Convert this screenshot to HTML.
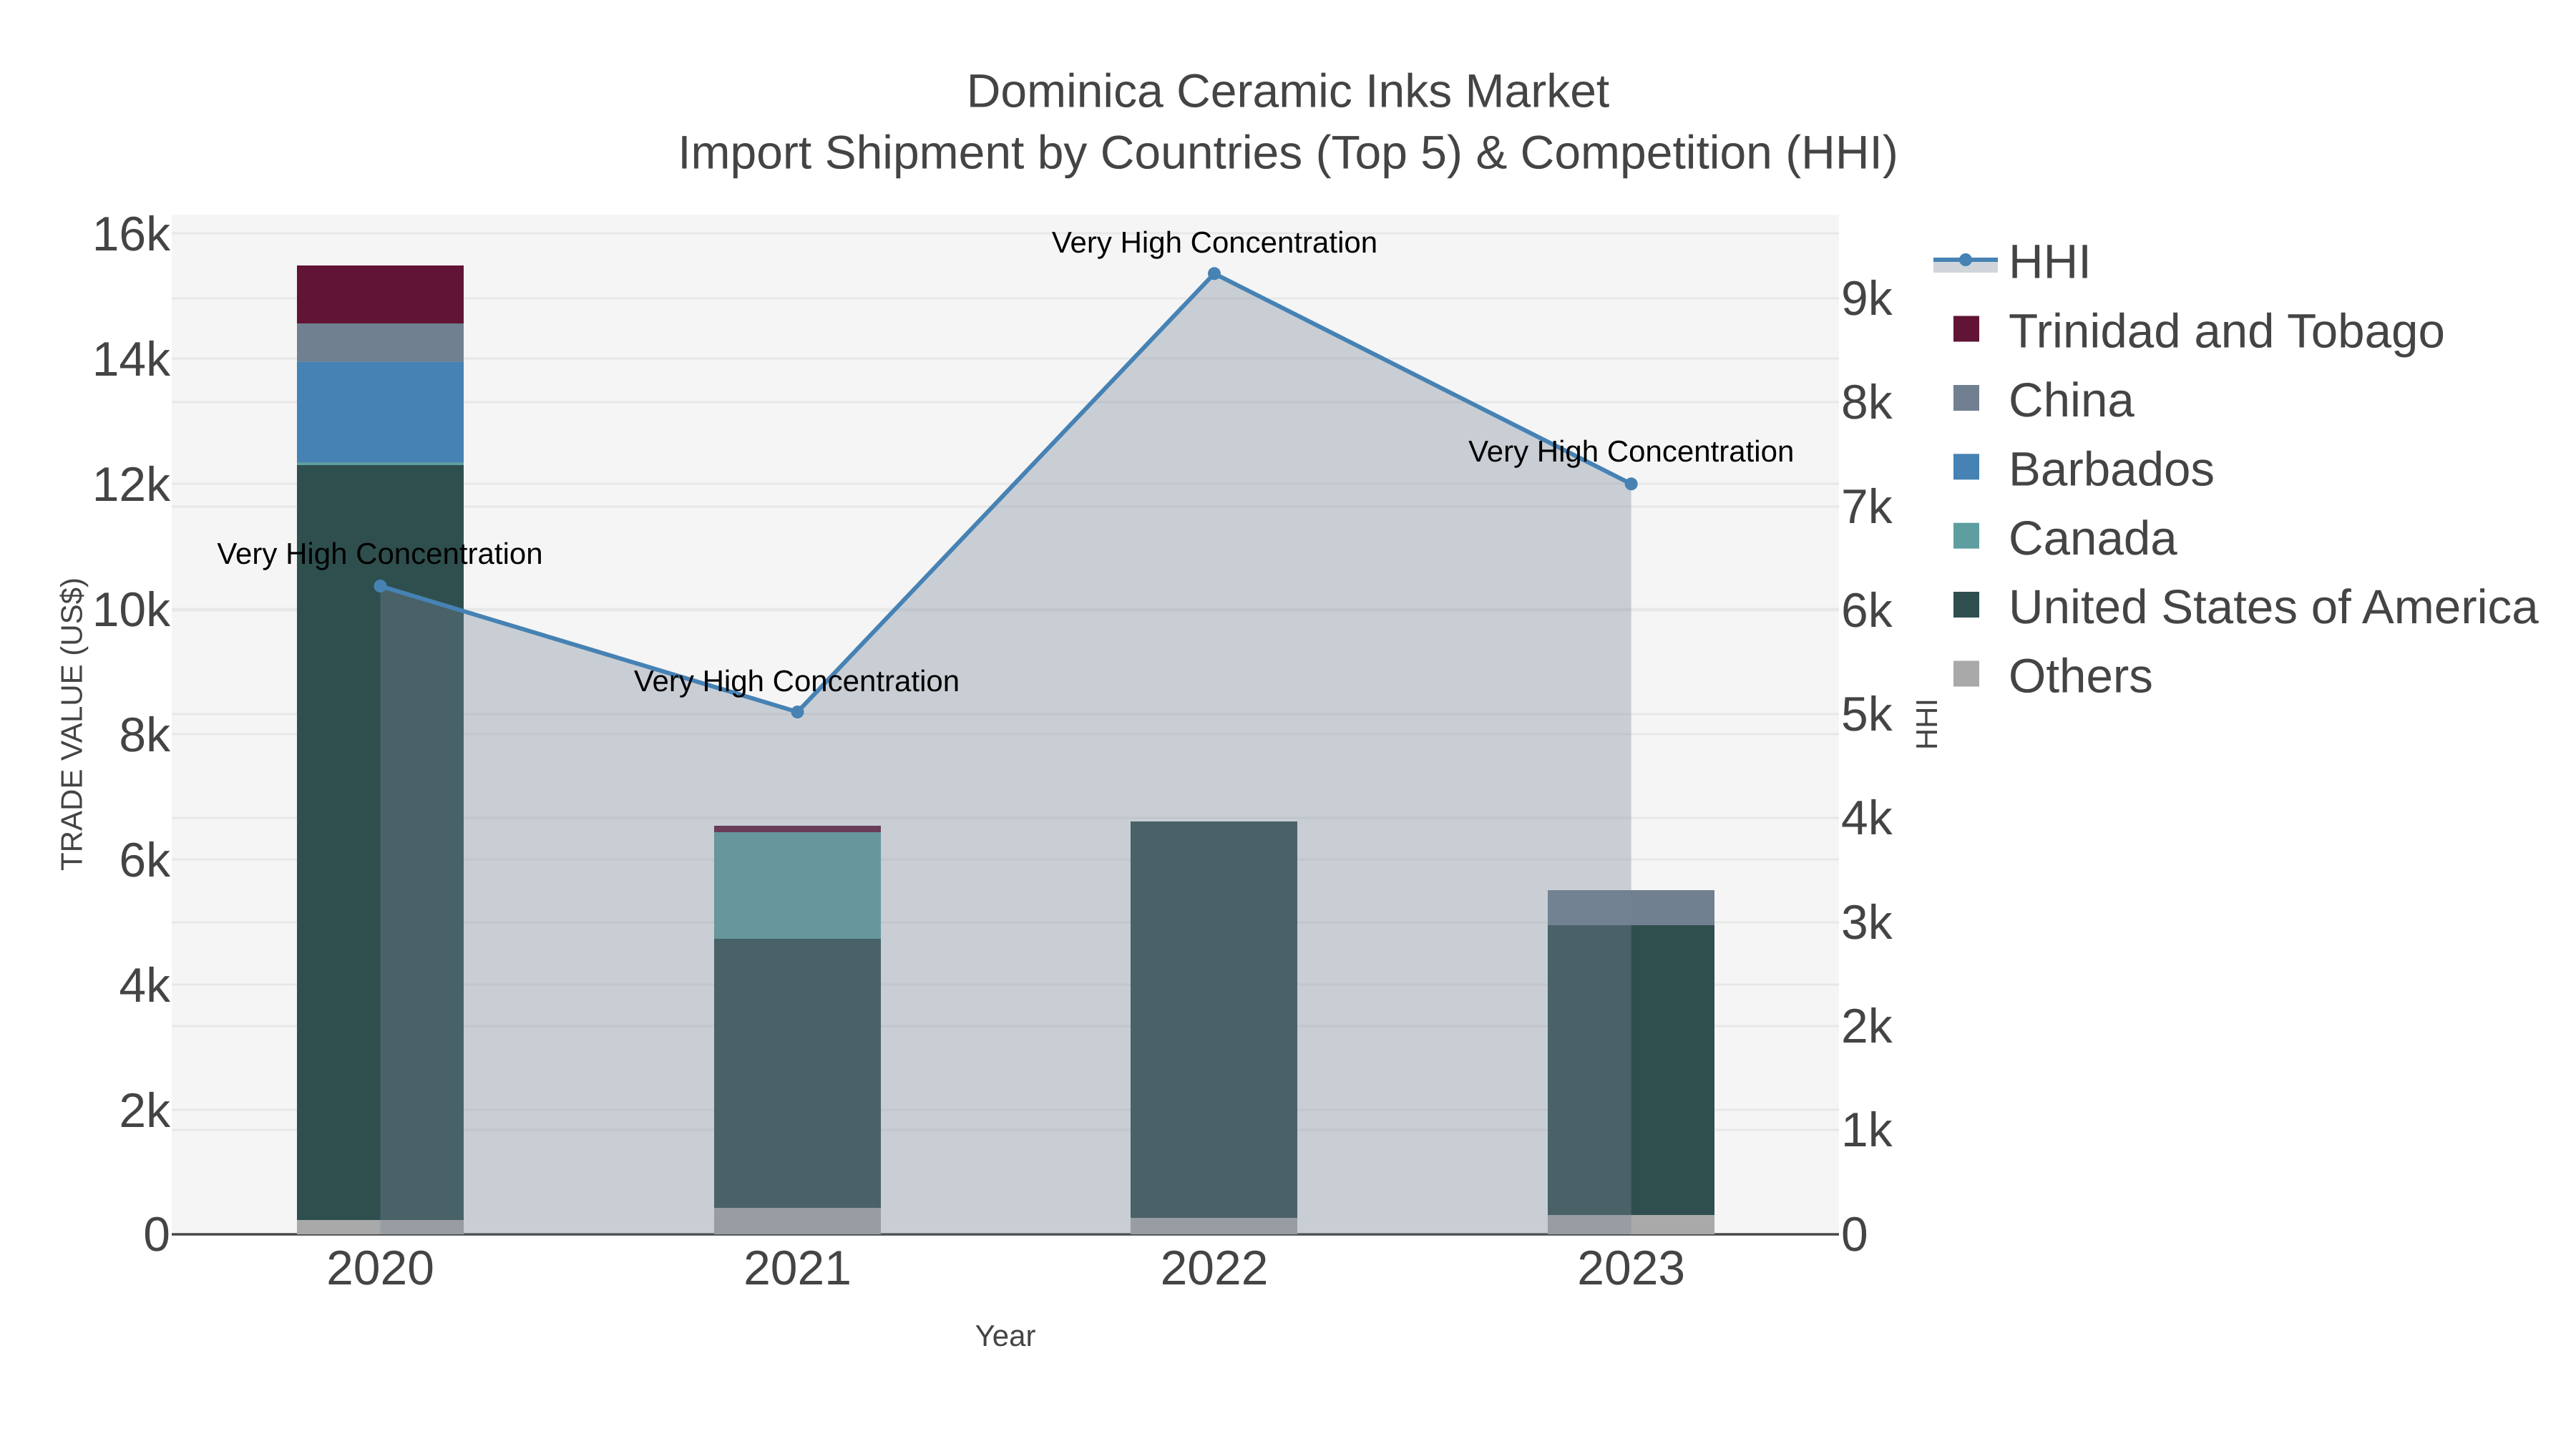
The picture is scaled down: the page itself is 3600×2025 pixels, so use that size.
<!DOCTYPE html>
<html>
<head>
<meta charset="utf-8">
<title>Dominica Ceramic Inks Market</title>
<style>
html,body{margin:0;padding:0;background:#fff;width:3600px;height:2025px;overflow:hidden}
svg{display:block}
text{font-family:"Liberation Sans",Arial,sans-serif;fill:#444;text-rendering:geometricPrecision}
.t{font-size:67.8px}
.l{font-size:67.3px}
.a{font-size:42px;fill:#000;text-anchor:middle}
.s{font-size:42px;text-anchor:middle}
.g{stroke:#e8e8e8;stroke-width:3;fill:none}
</style>
</head>
<body>
<svg width="3600" height="2025" viewBox="0 0 3600 2025" xmlns="http://www.w3.org/2000/svg">
<rect width="3600" height="2025" fill="#fff"/>
<rect x="240" y="300" width="2330" height="1425" fill="#f5f5f5"/>

<!-- gridlines -->
<g class="g">
<path d="M240 326H2570M240 501H2570M240 676H2570M240 851H2570M240 1026H2570M240 1201H2570M240 1376H2570M240 1551H2570"/>
<path d="M240 417H2570M240 562H2570M240 708H2570M240 853H2570M240 998H2570M240 1143H2570M240 1289H2570M240 1434H2570M240 1579H2570"/>
</g>
<rect x="240" y="1723.3" width="2330" height="3.4" fill="#444"/>

<!-- bars 2020 -->
<rect x="415" y="371" width="233" height="81" fill="#621436"/>
<rect x="415" y="452" width="233" height="53.6" fill="#708090"/>
<rect x="415" y="505.6" width="233" height="140.4" fill="#4682b4"/>
<rect x="415" y="646" width="233" height="4" fill="#5f9ea0"/>
<rect x="415" y="650" width="233" height="1055" fill="#2f4f4f"/>
<rect x="415" y="1705" width="233" height="20" fill="#a9a9a9"/>
<!-- bars 2021 -->
<rect x="998" y="1154" width="233" height="9" fill="#621436"/>
<rect x="998" y="1163" width="233" height="149" fill="#5f9ea0"/>
<rect x="998" y="1312" width="233" height="376" fill="#2f4f4f"/>
<rect x="998" y="1688" width="233" height="37" fill="#a9a9a9"/>
<!-- bars 2022 -->
<rect x="1580" y="1148" width="233" height="554" fill="#2f4f4f"/>
<rect x="1580" y="1702" width="233" height="23" fill="#a9a9a9"/>
<!-- bars 2023 -->
<rect x="2163" y="1244" width="233" height="49" fill="#708090"/>
<rect x="2163" y="1293" width="233" height="405" fill="#2f4f4f"/>
<rect x="2163" y="1698" width="233" height="27" fill="#a9a9a9"/>

<!-- HHI area and line -->
<path d="M531.5 819L1114.5 995L1697 382.3L2279.7 676.3V1725H531.5Z" fill="rgba(119,136,153,0.35)"/>
<path d="M531.5 819L1114.5 995L1697 382.3L2279.7 676.3" fill="none" stroke="#4682b4" stroke-width="6"/>
<g fill="#4682b4">
<circle cx="531.5" cy="819" r="9"/>
<circle cx="1114.5" cy="995" r="9"/>
<circle cx="1697" cy="382.3" r="9"/>
<circle cx="2279.7" cy="676.3" r="9"/>
</g>

<!-- annotations -->
<text class="a" x="531" y="788">Very High Concentration</text>
<text class="a" x="1113.5" y="966">Very High Concentration</text>
<text class="a" x="1697.5" y="353">Very High Concentration</text>
<text class="a" x="2279.7" y="645">Very High Concentration</text>

<!-- title -->
<text x="1800" y="149.5" text-anchor="middle" style="font-size:66px">Dominica Ceramic Inks Market</text>
<text x="1800" y="235.5" text-anchor="middle" style="font-size:66px">Import Shipment by Countries (Top 5) &amp; Competition (HHI)</text>

<!-- left ticks -->
<g class="t" text-anchor="end">
<text x="238" y="350">16k</text>
<text x="238" y="525">14k</text>
<text x="238" y="700">12k</text>
<text x="238" y="875">10k</text>
<text x="238" y="1050">8k</text>
<text x="238" y="1225">6k</text>
<text x="238" y="1400">4k</text>
<text x="238" y="1575">2k</text>
<text x="238" y="1748">0</text>
</g>

<!-- right ticks -->
<g class="t">
<text x="2573" y="440">9k</text>
<text x="2573" y="585">8k</text>
<text x="2573" y="731">7k</text>
<text x="2573" y="876">6k</text>
<text x="2573" y="1021">5k</text>
<text x="2573" y="1166">4k</text>
<text x="2573" y="1312">3k</text>
<text x="2573" y="1457">2k</text>
<text x="2573" y="1602">1k</text>
<text x="2573" y="1748">0</text>
</g>

<!-- x ticks -->
<g class="t" text-anchor="middle">
<text x="531.5" y="1795">2020</text>
<text x="1114.5" y="1795">2021</text>
<text x="1697" y="1795">2022</text>
<text x="2279.7" y="1795">2023</text>
</g>

<!-- axis titles -->
<text class="s" x="1405" y="1881">Year</text>
<text class="s" transform="translate(114.5 1012) rotate(-90)">TRADE VALUE (US$)</text>
<text class="s" transform="translate(2707 1012) rotate(-90)">HHI</text>

<!-- legend -->
<rect x="2702" y="363" width="90" height="18" fill="rgba(119,136,153,0.35)"/>
<rect x="2702" y="360" width="90" height="6" fill="#4682b4"/>
<circle cx="2747" cy="363" r="9" fill="#4682b4"/>
<rect x="2730" y="441.5" width="36" height="36" fill="#621436"/>
<rect x="2730" y="538" width="36" height="36" fill="#708090"/>
<rect x="2730" y="634.3" width="36" height="36" fill="#4682b4"/>
<rect x="2730" y="730.7" width="36" height="36" fill="#5f9ea0"/>
<rect x="2730" y="827" width="36" height="36" fill="#2f4f4f"/>
<rect x="2730" y="923.5" width="36" height="36" fill="#a9a9a9"/>
<g class="l">
<text x="2807" y="388.5">HHI</text>
<text x="2807" y="485.5">Trinidad and Tobago</text>
<text x="2807" y="582">China</text>
<text x="2807" y="678.5">Barbados</text>
<text x="2807" y="775">Canada</text>
<text x="2807" y="871">United States of America</text>
<text x="2807" y="967.5">Others</text>
</g>
</svg>
</body>
</html>
